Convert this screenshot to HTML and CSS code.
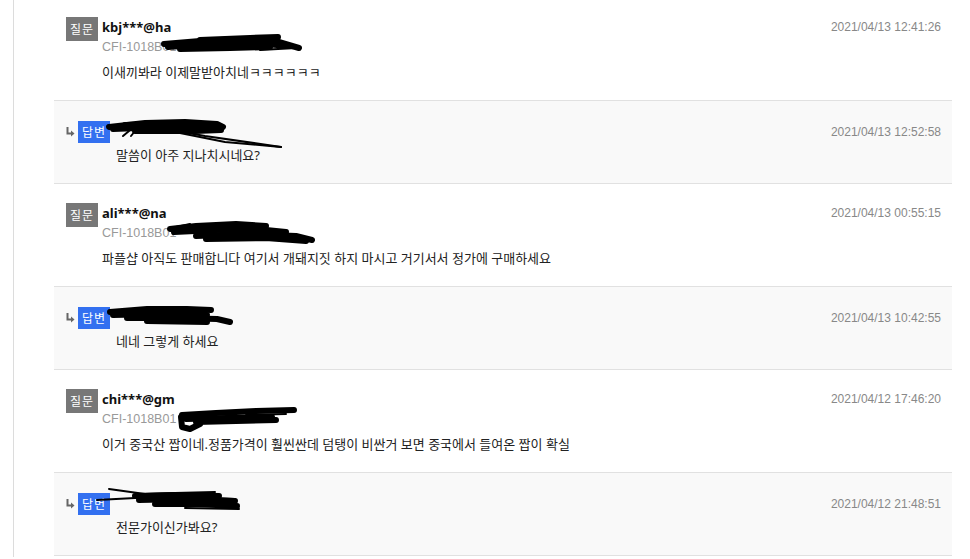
FILE: index.html
```html
<!DOCTYPE html>
<html lang="ko">
<head>
  <meta charset="UTF-8">
  <meta name="viewport" content="width=device-width, initial-scale=1.0">
  <title>상품문의</title>
  <link rel="stylesheet" href="styles.css">
</head>
<body>
  <div class="qna-page">
    <div class="qna-list">

      <div class="qna-item question">
        <span class="badge badge-q">질문</span>
        <div class="qna-body">
          <div class="qna-author">kbj***@ha</div>
          <div class="qna-option">CFI-1018B01</div>
          <p class="qna-text">이새끼봐라 이제말받아치네ㅋㅋㅋㅋㅋㅋ</p>
        </div>
        <span class="qna-date">2021/04/13 12:41:26</span>
        <svg class="scribble" style="left:106px;top:36px" width="142" height="20" viewBox="0 0 142 20">
          <path d="M4 10 L40 7 L80 5 L112 6 L139 14" />
          <path d="M8 13 L50 10 L95 9 L128 12" />
          <path d="M20 15 L70 14 L110 13" />
          <path d="M40 6 L90 4 L118 3" />
          <path d="M100 16 L136 14" class="thin" />
        </svg>
      </div>

      <div class="qna-item answer">
        <div class="qna-main">
          <div class="answer-head">
            <svg class="reply-arrow" width="9" height="10" viewBox="0 0 9 10">
              <path d="M1.5 0 V6.5 H6" fill="none" stroke="#666" stroke-width="2" />
              <path d="M5 3.5 L8.5 6.5 L5 9.5 Z" fill="#666" />
            </svg>
            <span class="badge badge-a">답변</span>
          </div>
          <p class="qna-text">말씀이 아주 지나치시네요?</p>
        </div>
        <span class="qna-date">2021/04/13 12:52:58</span>
        <svg class="scribble" style="left:51px;top:16px" width="178" height="34" viewBox="0 0 178 34">
          <path d="M4 10 L40 6 L80 5 L112 7 L118 10" />
          <path d="M8 12 L60 10 L110 11" />
          <path d="M20 8 L70 7 L100 8" />
          <path d="M30 14 L90 14 L116 13" />
          <path d="M66 13 L100 19 L176 30" class="thin" />
          <path d="M70 15 L120 25 L176 30" class="thin" />
          <path d="M18 19 L24 14 M26 19 L30 14" class="thin" />
        </svg>
      </div>

      <div class="qna-item question">
        <span class="badge badge-q">질문</span>
        <div class="qna-body">
          <div class="qna-author">ali***@na</div>
          <div class="qna-option">CFI-1018B01</div>
          <p class="qna-text">파플샵 아직도 판매합니다 여기서 개돼지짓 하지 마시고 거기서서 정가에 구매하세요</p>
        </div>
        <span class="qna-date">2021/04/13 00:55:15</span>
        <svg class="scribble" style="left:112px;top:36px" width="148" height="24" viewBox="0 0 148 24">
          <path d="M4 9 L30 6 L70 4 L100 6" />
          <path d="M8 12 L50 10 L90 9 L120 12" />
          <path d="M30 16 L80 14 L130 16 L146 20" />
          <path d="M40 19 L100 18 L140 21" />
          <path d="M10 7 L24 4" class="thin" />
        </svg>
      </div>

      <div class="qna-item answer">
        <div class="qna-main">
          <div class="answer-head">
            <svg class="reply-arrow" width="9" height="10" viewBox="0 0 9 10">
              <path d="M1.5 0 V6.5 H6" fill="none" stroke="#666" stroke-width="2" />
              <path d="M5 3.5 L8.5 6.5 L5 9.5 Z" fill="#666" />
            </svg>
            <span class="badge badge-a">답변</span>
          </div>
          <p class="qna-text">네네 그렇게 하세요</p>
        </div>
        <span class="qna-date">2021/04/13 10:42:55</span>
        <svg class="scribble" style="left:53px;top:18px" width="126" height="22" viewBox="0 0 126 22">
          <path d="M3 7 L40 4 L80 4 L104 5" />
          <path d="M6 10 L50 9 L100 10" />
          <path d="M20 13 L70 13 L110 14 L123 17" />
          <path d="M40 16 L100 17" />
        </svg>
      </div>

      <div class="qna-item question">
        <span class="badge badge-q">질문</span>
        <div class="qna-body">
          <div class="qna-author">chi***@gm</div>
          <div class="qna-option">CFI-1018B01</div>
          <p class="qna-text">이거 중국산 짭이네.정품가격이 훨씬싼데 덤탱이 비싼거 보면 중국에서 들여온 짭이 확실</p>
        </div>
        <span class="qna-date">2021/04/12 17:46:20</span>
        <svg class="scribble" style="left:122px;top:37px" width="122" height="26" viewBox="0 0 122 26">
          <path d="M6 8 L40 6 L80 4 L118 3" />
          <path d="M5 10 L6 20 L14 22 L24 17" />
          <path d="M10 12 L50 11 L96 10" />
          <path d="M20 15 L60 14 L100 13" />
          <path d="M70 8 L110 7" class="thin" />
        </svg>
      </div>

      <div class="qna-item answer">
        <div class="qna-main">
          <div class="answer-head">
            <svg class="reply-arrow" width="9" height="10" viewBox="0 0 9 10">
              <path d="M1.5 0 V6.5 H6" fill="none" stroke="#666" stroke-width="2" />
              <path d="M5 3.5 L8.5 6.5 L5 9.5 Z" fill="#666" />
            </svg>
            <span class="badge badge-a">답변</span>
          </div>
          <p class="qna-text">전문가이신가봐요?</p>
        </div>
        <span class="qna-date">2021/04/12 21:48:51</span>
        <svg class="scribble" style="left:41px;top:13px" width="146" height="26" viewBox="0 0 146 26">
          <path d="M2 14 L40 12 L90 11 L140 13" class="thin" />
          <path d="M14 3 L50 8 L80 7 L120 6" class="thin" />
          <path d="M40 10 L80 9 L124 10" />
          <path d="M44 14 L90 13 L140 15" />
          <path d="M60 18 L100 18 L142 20" />
          <path d="M90 22 L144 23" class="thin" />
        </svg>
      </div>

    </div>
  </div>
</body>
</html>
```

FILE: styles.css
```css
* {
  margin: 0;
  padding: 0;
  box-sizing: border-box;
}

body {
  font-family: "Noto Sans", "Noto Sans CJK KR", sans-serif;
  background: #ffffff;
  color: #333;
  overflow: hidden;
}

.qna-page {
  margin-left: 13px;
  min-height: 100vh;
  border-left: 1px solid #dcdcdc;
  padding: 0 18px 0 40px;
}

.qna-list {
  margin-top: -2px;
}

.qna-item {
  position: relative;
  display: flex;
  align-items: flex-start;
  border-bottom: 1px solid #e1e1e1;
}

.qna-item.question {
  padding: 19px 11px 18px 12px;
  background: #ffffff;
}

.qna-item.answer {
  padding: 20px 11px 18px 12px;
  background: #f9f9f9;
}

.badge {
  display: inline-flex;
  align-items: center;
  justify-content: center;
  width: 32px;
  color: #fff;
  font-size: 12px;
  letter-spacing: 1px;
  flex-shrink: 0;
}

.badge-q {
  height: 24px;
  background: #777777;
  margin-right: 4px;
}

.badge-a {
  height: 22px;
  background: #3370f0;
  margin-right: 6px;
}

.qna-body,
.qna-main {
  flex: 1;
}

.qna-author {
  font-size: 13px;
  font-weight: 700;
  color: #111;
  line-height: 20px;
}

.qna-option {
  font-family: "Liberation Sans", "Noto Sans", sans-serif;
  font-size: 12.5px;
  color: #999;
  line-height: 20px;
}

.qna-text {
  font-size: 13px;
  color: #222;
  line-height: 20px;
}

.question .qna-text {
  margin-top: 5px;
}

.answer-head {
  display: flex;
  align-items: center;
  height: 22px;
}

.reply-arrow {
  margin-right: 3px;
  flex-shrink: 0;
}

.answer .qna-text {
  margin-top: 2px;
  padding-left: 50px;
}

.qna-date {
  font-family: "Liberation Sans", "Noto Sans", sans-serif;
  font-size: 12px;
  color: #888;
  line-height: 20px;
  white-space: nowrap;
}

.answer .qna-date {
  margin-top: 1px;
}

.scribble {
  position: absolute;
  overflow: visible;
}

.scribble path {
  fill: none;
  stroke: #000;
  stroke-width: 6;
  stroke-linecap: round;
  stroke-linejoin: round;
}

.scribble path.thin {
  stroke-width: 2;
}
```
